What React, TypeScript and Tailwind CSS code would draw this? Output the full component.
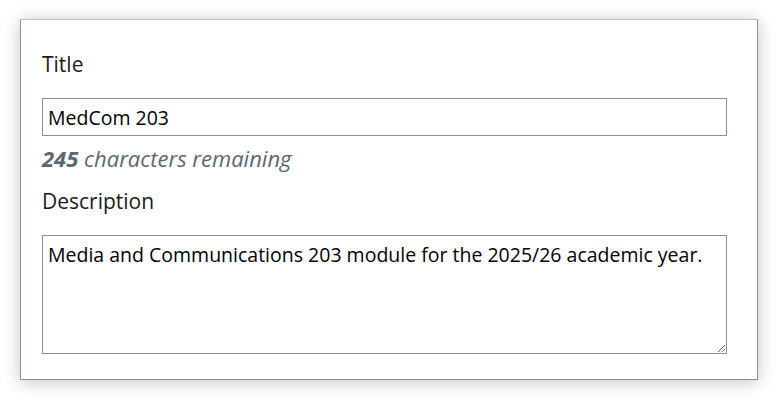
export default function App() {
  return (
    <div className="w-[777px] h-[400px] bg-white pt-[19px] pl-[20px] font-['Open_Sans',sans-serif]">
      <div className="w-[738px] h-[361px] bg-white border border-[#8c9299] border-t-[#bcc0c4] shadow-[0_2px_16px_rgba(0,0,0,0.24)] px-[21px] pt-[30px]">
        <label className="block text-[21px] leading-[28px] text-[#1b1b1b]">Title</label>
        <input
          defaultValue="MedCom 203"
          className="mt-[20px] block w-[685px] h-[38px] border border-[#8a9098] px-[5px] text-[19.5px] text-black outline-none"
        />
        <p className="mt-[8px] text-[22px] leading-[28px] italic text-[#5d6670]">
          <span className="font-bold">245</span> characters remaining
        </p>
        <label className="mt-[15px] block text-[21px] leading-[28px] text-[#1b1b1b]">Description</label>
        <textarea
          defaultValue="Media and Communications 203 module for the 2025/26 academic year."
          className="mt-[20px] block w-[685px] h-[119px] border border-[#8a9098] px-[5px] py-[5px] text-[19.5px] leading-[28px] text-black outline-none"
        />
      </div>
    </div>
  );
}
